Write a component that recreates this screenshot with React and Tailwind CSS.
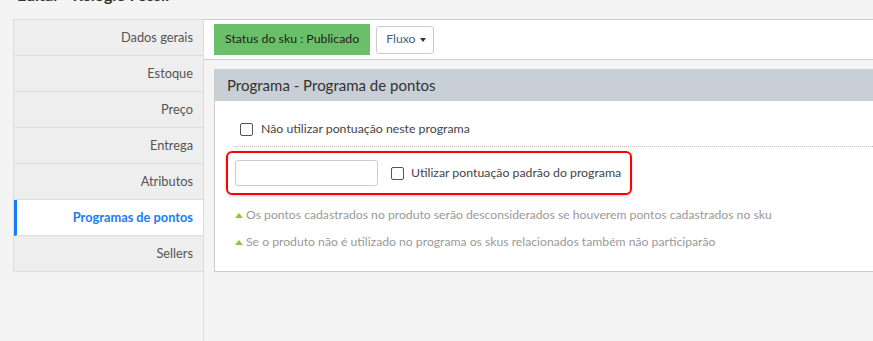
import { useState } from "react";

const menu = [
  "Dados gerais",
  "Estoque",
  "Preço",
  "Entrega",
  "Atributos",
  "Programas de pontos",
  "Sellers",
];

const notes = [
  "Os pontos cadastrados no produto serão desconsiderados se houverem pontos cadastrados no sku",
  "Se o produto não é utilizado no programa os skus relacionados também não participarão",
];

const Check = () => (
  <span className="inline-block w-[13px] h-[13px] border border-[#555] rounded-[2px] bg-white shrink-0" />
);

const App = () => {
  const [active] = useState("Programas de pontos");

  return (
    <div
      className="w-[873px] h-[341px] overflow-hidden bg-[#f4f4f4] text-[#555] flex flex-col"
      style={{ fontFamily: "Lato, 'Open Sans', sans-serif" }}
    >
      <div className="h-[19px] shrink-0 overflow-hidden pl-[17px]">
        <h1 className="text-[16px] font-bold text-[#333] leading-[20px] -mt-[15px]">
          Editar - Relógio Fossil
        </h1>
      </div>

      <div className="flex flex-1 pl-[13px]">
        <nav className="w-[190px] shrink-0 self-start border border-[#ddd] border-r-0 border-b-0">
          {menu.map((item) => {
            const on = item === active;
            return (
              <div
                key={item}
                className={
                  on
                    ? "h-[36px] flex items-center justify-end pr-[10px] bg-white border-b border-[#ddd] border-l-[3px] border-l-[#1a7cf5] text-[#1a7cf5] font-bold text-[12.8px]"
                    : "h-[36px] flex items-center justify-end pr-[10px] bg-[#eee] border-b border-[#ddd] text-[12.8px]"
                }
              >
                {item}
              </div>
            );
          })}
        </nav>

        <main className="flex-1 border-l border-[#ddd] flex flex-col">
          <div className="h-[41px] bg-white border-t border-b border-[#ccc] flex items-center gap-[6px] pl-[10px]">
            <div className="h-[31px] px-[11px] bg-[#6abf69] text-[#222] text-[12.3px] flex items-center whitespace-nowrap">
              Status do sku : Publicado
            </div>
            <button className="h-[28px] pl-[9px] pr-[7px] bg-white border border-[#ccc] rounded-[3px] text-[12.3px] text-[#4a5d7e] flex items-center gap-[4px]">
              Fluxo
              <span className="border-x-[3px] border-x-transparent border-t-[4px] border-t-[#333] inline-block" />
            </button>
          </div>

          <section className="mt-[9px] ml-[10px] bg-white border-l border-b border-[#ccc]">
            <div className="h-[32px] bg-[#c8cfd6] flex items-center pl-[12px] text-[15px] text-[#333]">
              Programa - Programa de pontos
            </div>
            <div className="pt-[20px] pb-[20px] pl-[20px]">
              <label className="flex items-center gap-[8px] pl-[5px] h-[16px] text-[12.3px] text-[#444]">
                <Check />
                Não utilizar pontuação neste programa
              </label>
              <div className="mt-[9px] border-t border-dotted border-[#bbb]" />
              <div className="-ml-[9px] mt-[4px] w-[406px] h-[44px] border-2 border-[#f00] rounded-[6px] flex items-center pl-[7px] gap-[13px] shadow-[0_1px_3px_rgba(0,0,0,0.2)]">
                <input className="w-[143px] h-[26px] border border-[#ccc] rounded-[3px] bg-white shrink-0" />
                <label className="flex items-center gap-[7px] text-[12.3px] text-[#444] whitespace-nowrap">
                  <Check />
                  Utilizar pontuação padrão do programa
                </label>
              </div>
              <ul className="mt-[11px] flex flex-col gap-[9px]">
                {notes.map((n) => (
                  <li key={n} className="flex items-center gap-[3px] text-[12.2px] text-[#999] h-[18px] whitespace-nowrap">
                    <span className="border-x-[4px] border-x-transparent border-b-[5px] border-b-[#8cc63f] inline-block" />
                    {n}
                  </li>
                ))}
              </ul>
            </div>
          </section>
        </main>
      </div>
    </div>
  );
};

export default App;
